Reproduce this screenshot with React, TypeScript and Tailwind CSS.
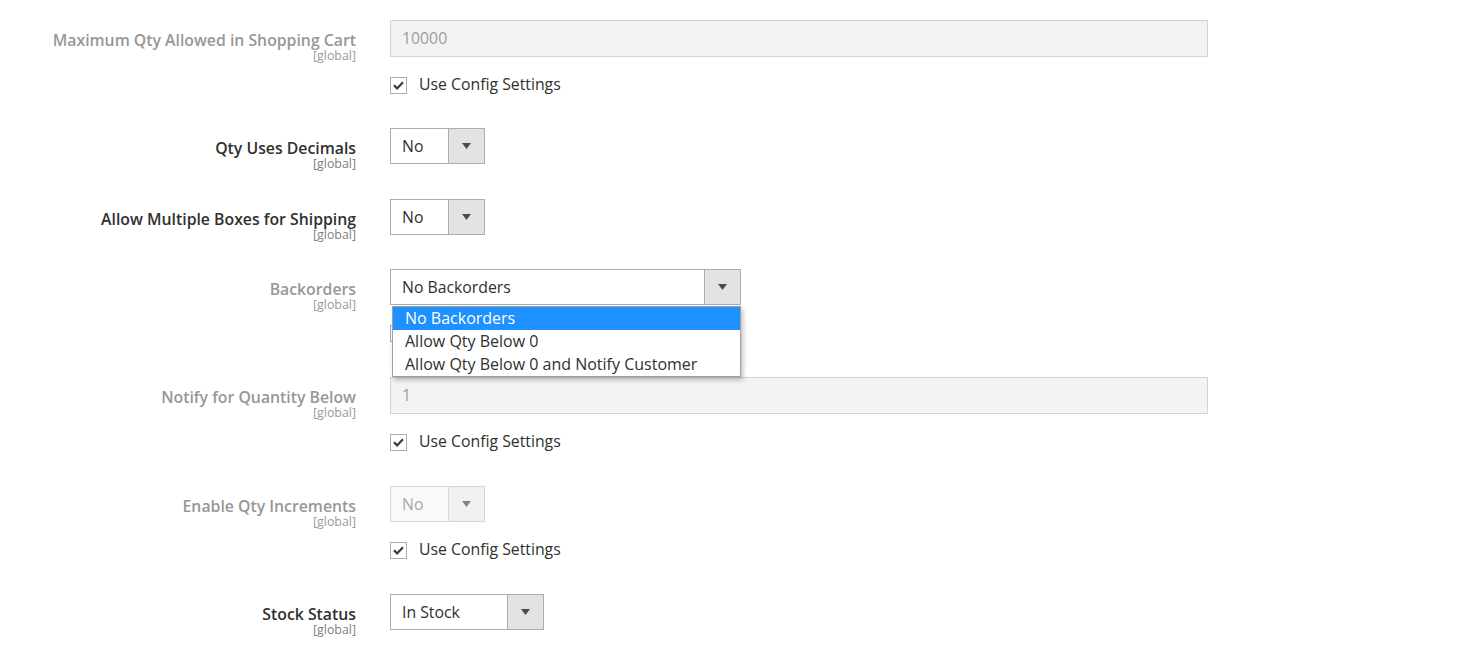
import React from "react";

const font = { fontFamily: '"Open Sans", "Noto Sans", sans-serif' };

// Label column on the left, right aligned, with the scope hint under it
function FieldLabel({ text, disabled }: { text: string; disabled?: boolean }) {
  return (
    <div className="w-[356px] h-[36px] shrink-0 text-right pt-[10px]">
      <div
        className={`text-[15.8px] leading-[20px] font-semibold whitespace-nowrap ${
          disabled ? "text-[#979797]" : "text-[#303030]"
        }`}
      >
        {text}
      </div>
      <div className={`text-[12.4px] leading-[14px] -mt-[1px] ${disabled ? "text-[#9a9a9a]" : "text-[#808080]"}`}>
        [global]
      </div>
    </div>
  );
}

function Arrow({ light }: { light?: boolean }) {
  return (
    <svg width="9" height="6" viewBox="0 0 9 6">
      <path d="M0 0h9L4.5 6z" fill={light ? "#8a8480" : "#514943"} />
    </svg>
  );
}

function Select({ value, width, disabled }: { value: string; width: string; disabled?: boolean }) {
  return (
    <div
      className={`flex h-[36px] border ${width} ${
        disabled ? "border-[#d6d6d6] bg-[#fafafa] text-[#a8a8a8]" : "border-[#adadad] bg-white text-[#303030]"
      }`}
    >
      <div className="flex-1 pl-[11px] text-[15.8px] leading-[34px] whitespace-nowrap">{value}</div>
      <div
        className={`w-[36px] flex items-center justify-center border-l ${
          disabled ? "border-[#d6d6d6] bg-[#f1f1f1]" : "border-[#adadad] bg-[#e3e3e3]"
        }`}
      >
        <Arrow light={disabled} />
      </div>
    </div>
  );
}

function TextInput({ value }: { value: string }) {
  return (
    <div className="h-[37px] w-[818px] border border-[#d3d3d3] bg-[#f3f3f3] pl-[11px] text-[15.8px] leading-[35px] text-[#9d9d9d]">
      {value}
    </div>
  );
}

function ConfigCheckbox() {
  return (
    <div className="flex items-center mt-[20px] h-[16px]">
      <div className="w-[17px] h-[17px] border border-[#adadad] bg-white flex items-center justify-center">
        <svg width="11" height="9" viewBox="0 0 11 9">
          <path d="M1 4.3l3.1 3.1L10 1.3" stroke="#41362f" strokeWidth="2.2" fill="none" />
        </svg>
      </div>
      <span className="ml-[12px] text-[15.8px] text-[#303030] whitespace-nowrap">Use Config Settings</span>
    </div>
  );
}

const options = ["No Backorders", "Allow Qty Below 0", "Allow Qty Below 0 and Notify Customer"];

export default function App() {
  return (
    <div style={font} className="w-[1473px] h-[656px] bg-white overflow-hidden pt-[20px]">
      {/* Maximum Qty */}
      <div className="flex gap-[34px]">
        <FieldLabel text="Maximum Qty Allowed in Shopping Cart" disabled />
        <div>
          <TextInput value="10000" />
          <ConfigCheckbox />
        </div>
      </div>

      <div className="flex gap-[34px] mt-[35px]">
        <FieldLabel text="Qty Uses Decimals" />
        <Select value="No" width="w-[95px]" />
      </div>

      <div className="flex gap-[34px] mt-[35px]">
        <FieldLabel text="Allow Multiple Boxes for Shipping" />
        <Select value="No" width="w-[95px]" />
      </div>

      {/* Backorders with the open option list */}
      <div className="flex gap-[34px] mt-[34px]">
        <FieldLabel text="Backorders" disabled />
        <div className="relative">
          <Select value="No Backorders" width="w-[351px]" />
          <ConfigCheckbox />
          <div className="absolute left-[2px] top-[37px] w-[349px] border border-[#a0a0a0] bg-white shadow-[2px_3px_5px_rgba(0,0,0,0.25)] z-10">
            {options.map((o, i) => (
              <div
                key={o}
                className={`h-[23px] pl-[12px] text-[16px] leading-[23px] whitespace-nowrap ${
                  i === 0 ? "bg-[#1e90ff] text-white" : "text-[#303030]"
                }`}
              >
                {o}
              </div>
            ))}
          </div>
        </div>
      </div>

      <div className="flex gap-[34px] mt-[36px]">
        <FieldLabel text="Notify for Quantity Below" disabled />
        <div>
          <TextInput value="1" />
          <ConfigCheckbox />
        </div>
      </div>

      <div className="flex gap-[34px] mt-[36px]">
        <FieldLabel text="Enable Qty Increments" disabled />
        <div>
          <Select value="No" width="w-[95px]" disabled />
          <ConfigCheckbox />
        </div>
      </div>

      <div className="flex gap-[34px] mt-[36px]">
        <FieldLabel text="Stock Status" />
        <Select value="In Stock" width="w-[154px]" />
      </div>
    </div>
  );
}
